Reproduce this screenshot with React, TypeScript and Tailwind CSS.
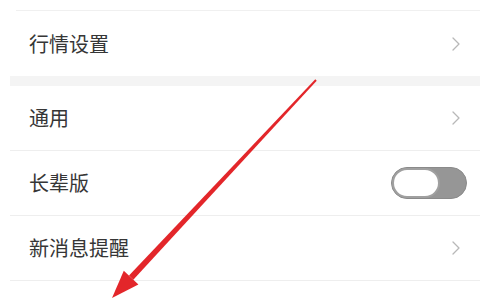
import { ChevronRight } from 'lucide-react'

const font = { fontFamily: '"Noto Sans CJK SC", "Noto Sans", sans-serif' }

function Row({ label, children, divider = true }: { label: string; children?: React.ReactNode; divider?: boolean }) {
  return (
    <div className={`ml-[10px] h-[65px] flex items-center justify-between pl-[19px] pr-[12px] ${divider ? 'border-b border-[#eeeeee]' : ''}`}>
      <span className="text-[20px] text-[#363636] leading-none">{label}</span>
      {children ?? <ChevronRight size={24} strokeWidth={1.3} className="text-[#b8b8b8]" />}
    </div>
  )
}

function Toggle() {
  return (
    <div className="w-[76px] h-[32px] rounded-full bg-[#969696] border border-[#8a8a8a] flex items-center mr-[1px]">
      <div className="w-[48px] h-[30px] rounded-full bg-white border-2 border-[#a0a0a0]" />
    </div>
  )
}

export default function App() {
  return (
    <div className="relative w-[480px] h-[300px] bg-white overflow-hidden" style={font}>
      <div className="h-[10px]" />
      <div className="ml-[16px] border-t border-[#f0f0f0]" />
      <Row label="行情设置" divider={false} />
      <div className="ml-[10px] h-[10px] bg-[#f4f4f4]" />
      <Row label="通用" />
      <Row label="长辈版">
        <Toggle />
      </Row>
      <Row label="新消息提醒" />

      {/* 红色箭头 */}
      <svg className="absolute inset-0 pointer-events-none" width="480" height="300" viewBox="0 0 480 300">
        <polygon points="316.7,80.7 315.3,79.3 129,275.6 133.3,279.7" fill="#e3262a" />
        <polygon points="112,298 123.8,270.8 138.4,284.4" fill="#e3262a" />
      </svg>
    </div>
  )
}
